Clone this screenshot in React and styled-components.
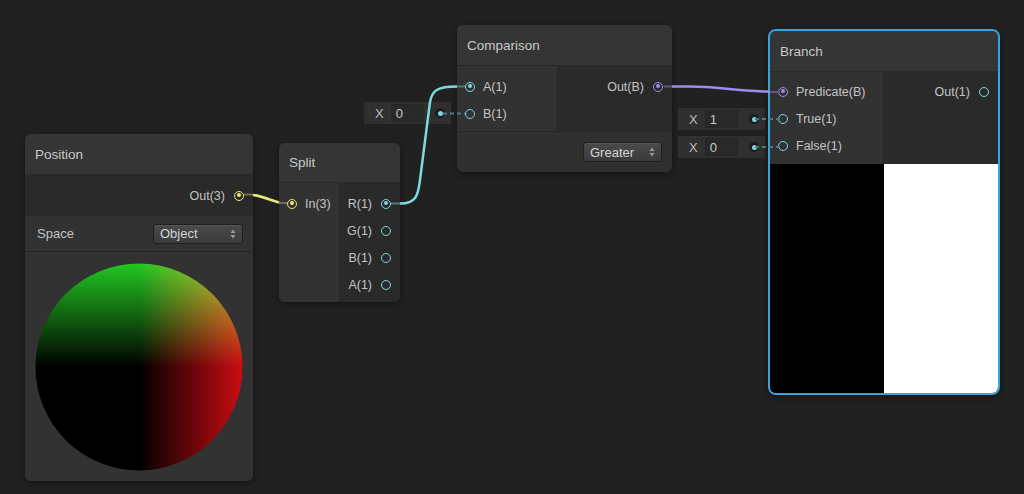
import React from 'react';
import styled, { createGlobalStyle } from 'styled-components';

const GlobalStyle = createGlobalStyle`
  html, body {
    margin: 0;
    padding: 0;
    background: #212121;
  }
  body {
    font-family: "Liberation Sans", Arial, sans-serif;
  }
`;

const PORT = {
  vec3: '#e8e87c',
  vec1: '#7fd8de',
  bool: '#9d8ceb',
};

const Canvas = styled.div`
  position: relative;
  width: 1024px;
  height: 494px;
  overflow: hidden;
  background: #212121;
`;

const NodeBox = styled.div`
  position: absolute;
  left: ${(p) => p.$x}px;
  top: ${(p) => p.$y}px;
  width: ${(p) => p.$w}px;
  height: ${(p) => p.$h}px;
  box-sizing: border-box;
  display: flex;
  flex-direction: column;
  background: #323232;
  border-radius: 6px;
  overflow: hidden;
  box-shadow: 0 2px 6px rgba(0, 0, 0, 0.45);
  border: ${(p) => (p.$selected ? '2px solid #3aa3dc' : 'none')};
  border-radius: ${(p) => (p.$selected ? '8px' : '6px')};
`;

const Header = styled.div`
  flex: none;
  height: ${(p) => p.$h || 41}px;
  box-sizing: border-box;
  display: flex;
  align-items: center;
  padding-left: 10px;
  font-size: 13.5px;
  color: #c9c9c9;
  background: #353535;
  border-bottom: 1px solid #292929;
`;

const Ports = styled.div`
  flex: none;
  display: grid;
  grid-template-columns: ${(p) => p.$cols};
  border-bottom: ${(p) => (p.$line ? '1px solid #262626' : 'none')};
`;

const Column = styled.div`
  display: flex;
  flex-direction: column;
  padding: ${(p) => p.$pad || '7px 0 4px'};
  background: ${(p) => (p.$out ? '#2a2a2a' : '#323232')};
  border-right: ${(p) => (p.$out ? 'none' : '1px solid #272727')};
`;

const PortRow = styled.div`
  height: ${(p) => p.$h || 27}px;
  display: flex;
  align-items: center;
  justify-content: ${(p) => (p.$out ? 'flex-end' : 'flex-start')};
  gap: ${(p) => (p.$out ? 9 : 8)}px;
  padding: ${(p) => (p.$out ? '0 9px 0 0' : '0 0 0 8px')};
  font-size: 12.5px;
  color: #c4c4c4;
`;

const PortDot = styled.span`
  flex: none;
  position: relative;
  width: 10px;
  height: 10px;
  box-sizing: border-box;
  border-radius: 50%;
  border: 1.5px solid ${(p) => p.$color};
  &::after {
    content: '';
    display: ${(p) => (p.$on ? 'block' : 'none')};
    position: absolute;
    left: 1.5px;
    top: 1.5px;
    width: 4px;
    height: 4px;
    border-radius: 50%;
    background: ${(p) => p.$color};
  }
`;

const FieldRow = styled.div`
  flex: none;
  height: 35px;
  display: flex;
  align-items: center;
  justify-content: ${(p) => p.$justify || 'space-between'};
  padding: 0 10px 0 12px;
  font-size: 13px;
  color: #c4c4c4;
  background: ${(p) => p.$bg || '#323232'};
  border-bottom: 1px solid #262626;
`;

const SelectBox = styled.div`
  width: ${(p) => p.$w}px;
  height: 20px;
  box-sizing: border-box;
  display: flex;
  align-items: center;
  justify-content: space-between;
  padding: 0 6px 0 6px;
  border-radius: 3px;
  border: 1px solid #1f1f1f;
  background: linear-gradient(#4a4a4a, #3b3b3b);
  box-shadow: inset 0 1px 0 rgba(255, 255, 255, 0.07);
  color: #d4d4d4;
  font-size: 13px;
`;

const Preview = styled.div`
  flex: 1;
  display: flex;
  align-items: center;
  justify-content: center;
  background: ${(p) => p.$bg || '#323232'};
`;

const Half = styled.div`
  flex: 1;
  align-self: stretch;
  background: ${(p) => p.$color};
`;

const InlineInput = styled.div`
  position: absolute;
  left: ${(p) => p.$x}px;
  top: ${(p) => p.$y}px;
  width: 87px;
  height: 22px;
  box-sizing: border-box;
  display: flex;
  align-items: center;
  padding: 0 6px 0 11px;
  background: #303030;
  font-size: 13px;
  color: #bdbdbd;
`;

const InlineField = styled.div`
  width: 33px;
  height: 18px;
  box-sizing: border-box;
  margin-left: 7px;
  padding-left: 4px;
  display: flex;
  align-items: center;
  background: #292929;
  border: 1px solid #262626;
  color: #c8c8c8;
`;

const InlineDot = styled.span`
  margin-left: auto;
  width: 10px;
  height: 10px;
  border-radius: 50%;
  background: #1d1d1d;
  display: flex;
  align-items: center;
  justify-content: center;
  &::after {
    content: '';
    width: 5px;
    height: 5px;
    border-radius: 50%;
    background: ${PORT.vec1};
  }
`;

const Wires = styled.svg`
  position: absolute;
  left: 0;
  top: 0;
  pointer-events: none;
`;

const Arrows = () => (
  <svg width="6" height="10" viewBox="0 0 6 10">
    <path d="M3 0.5 L5.5 4 L0.5 4 Z" fill="#9a9a9a" />
    <path d="M3 9.5 L5.5 6 L0.5 6 Z" fill="#9a9a9a" />
  </svg>
);

const Select = ({ w, children }) => (
  <SelectBox $w={w}>
    <span>{children}</span>
    <Arrows />
  </SelectBox>
);

const Port = ({ label, color, on, out, h }) => (
  <PortRow $out={out} $h={h}>
    {out ? (
      <>
        <span>{label}</span>
        <PortDot $color={color} $on={on} />
      </>
    ) : (
      <>
        <PortDot $color={color} $on={on} />
        <span>{label}</span>
      </>
    )}
  </PortRow>
);

const Sphere = () => (
  <svg width="208" height="208" viewBox="0 0 208 208">
    <defs>
      <clipPath id="ball">
        <circle cx="104" cy="104" r="103.5" />
      </clipPath>
      <linearGradient id="green" x1="0" y1="1" x2="0" y2="0">
        <stop offset="0" stopColor="#000" />
        <stop offset="1" stopColor="#22c822" />
      </linearGradient>
      <linearGradient id="red" x1="0" y1="0" x2="1" y2="0">
        <stop offset="0" stopColor="#000" />
        <stop offset="1" stopColor="#cc0c14" />
      </linearGradient>
    </defs>
    <g clipPath="url(#ball)">
      <rect x="0" y="0" width="208" height="208" fill="#000" />
      <rect x="0" y="0" width="208" height="104" fill="url(#green)" />
      <rect x="104" y="0" width="104" height="208" fill="url(#red)" style={{ mixBlendMode: 'screen' }} />
    </g>
  </svg>
);

const InlineValue = ({ x, y, value }) => (
  <InlineInput $x={x} $y={y}>
    <span>X</span>
    <InlineField>{value}</InlineField>
    <InlineDot />
  </InlineInput>
);

export default function App() {
  return (
    <Canvas>
      <GlobalStyle />

      <NodeBox $x={25} $y={134} $w={228} $h={347}>
        <Header>Position</Header>
        <Ports $cols="1fr">
          <Column $out $pad="0">
            <Port label="Out(3)" color={PORT.vec3} on out h={41} />
          </Column>
        </Ports>
        <FieldRow>
          <span>Space</span>
          <Select w={90}>Object</Select>
        </FieldRow>
        <Preview>
          <Sphere />
        </Preview>
      </NodeBox>

      <NodeBox $x={279} $y={143} $w={121} $h={159}>
        <Header $h={40}>Split</Header>
        <Ports $cols="61px 60px" style={{ flex: 1 }}>
          <Column>
            <Port label="In(3)" color={PORT.vec3} on />
          </Column>
          <Column $out>
            <Port label="R(1)" color={PORT.vec1} on out />
            <Port label="G(1)" color={PORT.vec1} out />
            <Port label="B(1)" color={PORT.vec1} out />
            <Port label="A(1)" color={PORT.vec1} out />
          </Column>
        </Ports>
      </NodeBox>

      <NodeBox $x={457} $y={25} $w={215} $h={147}>
        <Header>Comparison</Header>
        <Ports $cols="101px 114px" $line>
          <Column>
            <Port label="A(1)" color={PORT.vec1} on />
            <Port label="B(1)" color={PORT.vec1} />
          </Column>
          <Column $out>
            <Port label="Out(B)" color={PORT.bool} on out />
          </Column>
        </Ports>
        <FieldRow $justify="flex-end" $bg="#303030" style={{ flex: 1, borderBottom: 'none' }}>
          <Select w={79}>Greater</Select>
        </FieldRow>
      </NodeBox>

      <InlineValue x={364} y={102} value="0" />
      <InlineValue x={678} y={108} value="1" />
      <InlineValue x={678} y={136} value="0" />

      <NodeBox $x={768} $y={29} $w={232} $h={366} $selected>
        <Header>Branch</Header>
        <Ports $cols="114px 114px">
          <Column $pad="6px 0 5px">
            <Port label="Predicate(B)" color={PORT.bool} on />
            <Port label="True(1)" color={PORT.vec1} />
            <Port label="False(1)" color={PORT.vec1} />
          </Column>
          <Column $out $pad="6px 0 5px">
            <Port label="Out(1)" color={PORT.vec1} out />
          </Column>
        </Ports>
        <Preview style={{ alignItems: 'stretch' }}>
          <Half $color="#000" />
          <Half $color="#fff" />
        </Preview>
      </NodeBox>

      <Wires width="1024" height="494">
        {/* stubs inside the nodes */}
        <line x1="244" y1="194.5" x2="253" y2="194.5" stroke="#6e6e52" strokeWidth="2" />
        <line x1="279" y1="203" x2="287" y2="203" stroke="#6e6e52" strokeWidth="2" />
        <line x1="391" y1="203.5" x2="400" y2="203.5" stroke="#4d7b7f" strokeWidth="2" />
        <line x1="457" y1="86.5" x2="465" y2="86.5" stroke="#4d7b7f" strokeWidth="2" />
        <line x1="443" y1="113.5" x2="465" y2="113.5" stroke="#4d7b7f" strokeWidth="2" strokeDasharray="4 3" />
        <line x1="664" y1="86.5" x2="672" y2="86.5" stroke="#5f5780" strokeWidth="2" />
        <line x1="770" y1="92" x2="780" y2="92" stroke="#5f5780" strokeWidth="2" />
        <line x1="755" y1="119" x2="780" y2="119" stroke="#4d7b7f" strokeWidth="2" strokeDasharray="4 3" />
        <line x1="755" y1="147" x2="780" y2="147" stroke="#4d7b7f" strokeWidth="2" strokeDasharray="4 3" />

        {/* connections */}
        <path d="M253 195 C262 196, 270 200, 279 202.5" fill="none" stroke={PORT.vec3} strokeWidth="2.5" />
        <path
          d="M400 203.5 C416 203.5, 418 196, 420 180 L430 102 C432 90, 438 86.5, 457 86.5"
          fill="none"
          stroke={PORT.vec1}
          strokeWidth="2.5"
        />
        <path d="M672 86.5 L690 86.5 C720 86.5, 735 91.5, 770 91.5" fill="none" stroke={PORT.bool} strokeWidth="2.5" />
      </Wires>
    </Canvas>
  );
}
